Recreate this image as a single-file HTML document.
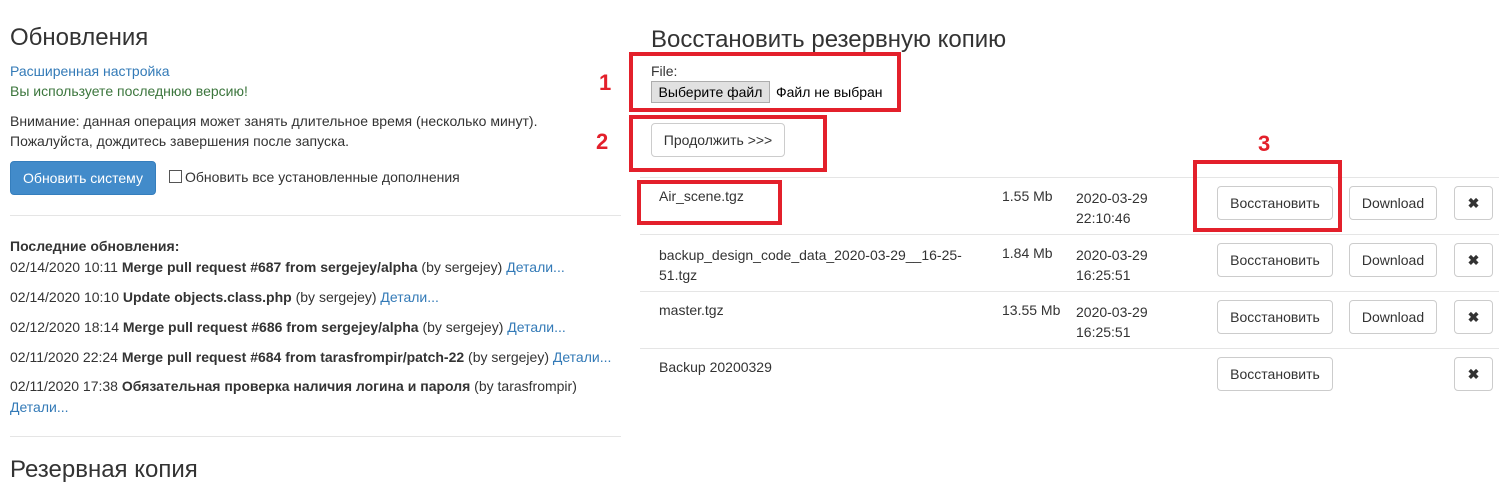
<!DOCTYPE html>
<html><head><meta charset="utf-8"><style>
body{margin:0;width:1499px;height:480px;overflow:hidden;background:#fff;font-family:"Liberation Sans",Arial,sans-serif;font-size:14px;color:#333;position:relative}
.a{position:absolute;white-space:nowrap}
.h{font-size:24px;color:#333}
.lnk{color:#337ab7}
.btn{position:absolute;border:1px solid #ccc;border-radius:4px;background:#fff;box-sizing:border-box;display:flex;align-items:center;justify-content:center;font-size:14px;color:#333}
.x{font-weight:bold;font-size:14px}
.rb{position:absolute;border:4px solid #e3202b;box-sizing:border-box}
.num{position:absolute;color:#e3202b;font-weight:bold;font-size:22px}
.hr{position:absolute;height:1px;background:#e5e5e5}
b{font-weight:bold}
</style></head><body>
<div class="a h" style="left:10px;top:24px">Обновления</div>
<div class="a lnk" style="left:10px;top:63px">Расширенная настройка</div>
<div class="a" style="left:10px;top:83px;color:#3c763d">Вы используете последнюю версию!</div>
<div class="a" style="left:10px;top:113px">Внимание: данная операция может занять длительное время (несколько минут).</div>
<div class="a" style="left:10px;top:133px">Пожалуйста, дождитесь завершения после запуска.</div>
<div class="btn" style="left:10px;top:161px;width:146px;height:34px;background:#428bca;border-color:#357ebd;color:#fff">Обновить систему</div>
<div class="a" style="left:169px;top:170px;width:11px;height:11px;border:1px solid #555"></div>
<div class="a" style="left:185px;top:169px">Обновить все установленные дополнения</div>
<div class="hr" style="left:10px;top:215px;width:611px"></div>
<div class="a" style="left:10px;top:238px"><b>Последние обновления:</b></div>
<div class="a" style="left:10px;top:259px">02/14/2020 10:11 <b>Merge pull request #687 from sergejey/alpha</b> (by sergejey) <span class="lnk">Детали...</span></div>
<div class="a" style="left:10px;top:289px">02/14/2020 10:10 <b>Update objects.class.php</b> (by sergejey) <span class="lnk">Детали...</span></div>
<div class="a" style="left:10px;top:319px">02/12/2020 18:14 <b>Merge pull request #686 from sergejey/alpha</b> (by sergejey) <span class="lnk">Детали...</span></div>
<div class="a" style="left:10px;top:349px">02/11/2020 22:24 <b>Merge pull request #684 from tarasfrompir/patch-22</b> (by sergejey) <span class="lnk">Детали...</span></div>
<div class="a" style="left:10px;top:378px">02/11/2020 17:38 <b>Обязательная проверка наличия логина и пароля</b> (by tarasfrompir)</div>
<div class="a lnk" style="left:10px;top:399px">Детали...</div>
<div class="hr" style="left:10px;top:436px;width:611px"></div>
<div class="a h" style="left:10px;top:456px">Резервная копия</div>

<div class="a h" style="left:651px;top:26px">Восстановить резервную копию</div>
<div class="rb" style="left:629px;top:52px;width:272px;height:60px"></div>
<div class="num" style="left:599px;top:70px">1</div>
<div class="a" style="left:651px;top:63px">File:</div>
<div class="a" style="left:651px;top:81px;width:119px;height:22px;background:#e1e1e1;border:1px solid #adadad;box-sizing:border-box;text-align:center;line-height:20px;color:#000">Выберите файл</div>
<div class="a" style="left:776px;top:84px;color:#000">Файл не выбран</div>
<div class="rb" style="left:629px;top:115px;width:198px;height:57px"></div>
<div class="num" style="left:596px;top:129px">2</div>
<div class="btn" style="left:651px;top:123px;width:134px;height:34px">Продолжить &gt;&gt;&gt;</div>
<div class="num" style="left:1258px;top:131px">3</div>

<div class="hr" style="left:640px;top:177px;width:859px"></div>
<div class="hr" style="left:640px;top:234px;width:859px"></div>
<div class="hr" style="left:640px;top:291px;width:859px"></div>
<div class="hr" style="left:640px;top:348px;width:859px"></div>

<div class="a" style="left:659px;top:188px">Air_scene.tgz</div>
<div class="a" style="left:1002px;top:188px">1.55 Mb</div>
<div class="a" style="left:1076px;top:188px;line-height:20px">2020-03-29<br>22:10:46</div>
<div class="btn" style="left:1217px;top:186px;width:116px;height:34px">Восстановить</div>
<div class="btn" style="left:1349px;top:186px;width:88px;height:34px">Download</div>
<div class="btn x" style="left:1454px;top:186px;width:39px;height:34px">✖</div>
<div class="rb" style="left:637px;top:180px;width:145px;height:45px"></div>
<div class="rb" style="left:1193px;top:160px;width:149px;height:72px"></div>

<div class="a" style="left:659px;top:245px;line-height:20px">backup_design_code_data_2020-03-29__16-25-<br>51.tgz</div>
<div class="a" style="left:1002px;top:245px">1.84 Mb</div>
<div class="a" style="left:1076px;top:245px;line-height:20px">2020-03-29<br>16:25:51</div>
<div class="btn" style="left:1217px;top:243px;width:116px;height:34px">Восстановить</div>
<div class="btn" style="left:1349px;top:243px;width:88px;height:34px">Download</div>
<div class="btn x" style="left:1454px;top:243px;width:39px;height:34px">✖</div>

<div class="a" style="left:659px;top:302px">master.tgz</div>
<div class="a" style="left:1002px;top:302px">13.55 Mb</div>
<div class="a" style="left:1076px;top:302px;line-height:20px">2020-03-29<br>16:25:51</div>
<div class="btn" style="left:1217px;top:300px;width:116px;height:34px">Восстановить</div>
<div class="btn" style="left:1349px;top:300px;width:88px;height:34px">Download</div>
<div class="btn x" style="left:1454px;top:300px;width:39px;height:34px">✖</div>

<div class="a" style="left:659px;top:359px">Backup 20200329</div>
<div class="btn" style="left:1217px;top:357px;width:116px;height:34px">Восстановить</div>
<div class="btn x" style="left:1454px;top:357px;width:39px;height:34px">✖</div>
</body></html>
